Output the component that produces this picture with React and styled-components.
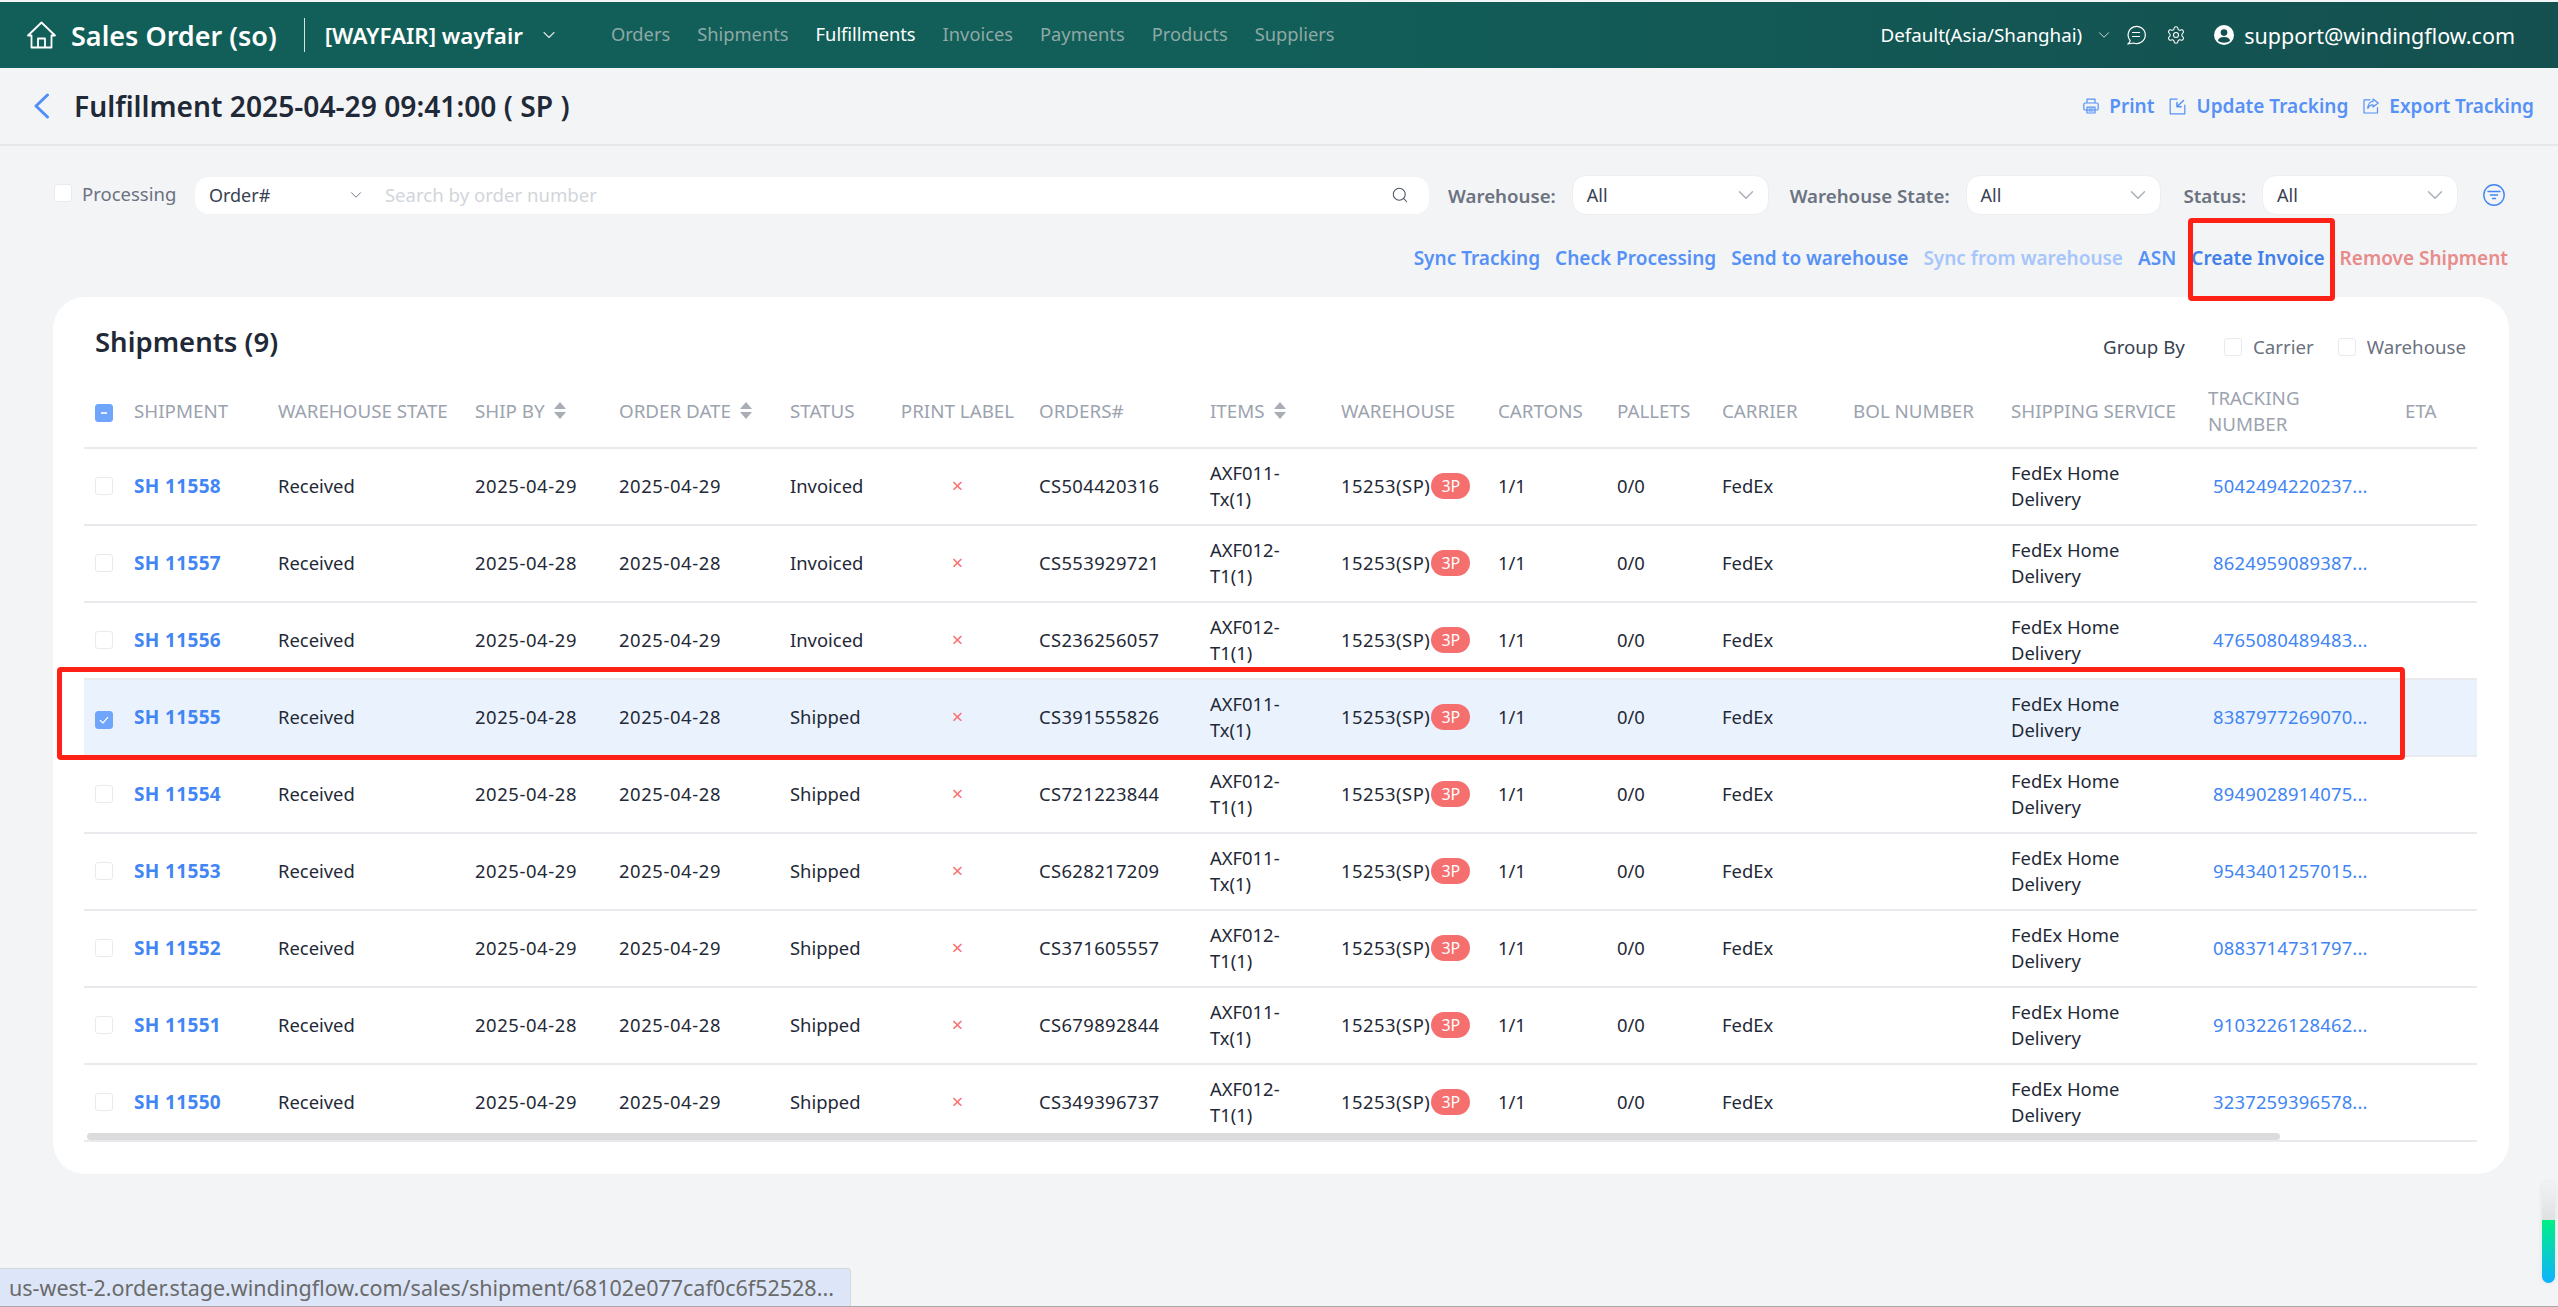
import React from 'react';
import styled, { createGlobalStyle } from 'styled-components';
import { ChevronDown, Search, Settings } from 'lucide-react';

const GlobalStyle = createGlobalStyle`
  html, body {
    margin: 0;
    padding: 0;
    background: #f3f4f6;
    font-family: "Noto Sans", "Noto Sans CJK SC", sans-serif;
    color: #1f2937;
  }
  * {
    box-sizing: border-box;
  }
`;

const Page = styled.div`
  position: relative;
  height: 1307px;
  overflow: hidden;
  padding-top: 2px;
  background: #f3f4f6;
  border-bottom: 1px solid #a8a8a8;
`;

const TopBar = styled.header`
  height: 66px;
  display: flex;
  align-items: center;
  padding: 0 43px 0 27px;
  background: linear-gradient(90deg, #125f59 0%, #125e58 50%, #14504f 100%);
  color: #fff;
`;

const AppTitle = styled.span`
  margin-left: 15px;
  font-size: 27px;
  font-weight: 600;
  white-space: nowrap;
`;

const Divider = styled.span`
  width: 1px;
  height: 34px;
  margin: 0 20px 0 27px;
  background: #d7e3e1;
`;

const Store = styled.span`
  font-size: 22.3px;
  font-weight: 600;
  white-space: nowrap;
`;

const Nav = styled.nav`
  display: flex;
  gap: 27px;
  margin: -3px 0 0 52px;
`;

const NavItem = styled.a`
  font-size: 18.3px;
  color: ${props => (props.$active ? '#fff' : '#8fa9a6')};
`;

const TopRight = styled.div`
  margin-left: auto;
  display: flex;
  align-items: center;
`;

const Zone = styled.span`
  font-size: 18.8px;
  white-space: nowrap;
`;

const Email = styled.span`
  margin-left: 10px;
  font-size: 21.5px;
  white-space: nowrap;
`;

const TitleRow = styled.div`
  height: 78px;
  display: flex;
  align-items: center;
  padding: 0 24px 0 33px;
  border-bottom: 2px solid #e5e7eb;
`;

const PageTitle = styled.h1`
  margin: 0 0 0 24px;
  font-size: 28.2px;
  font-weight: 600;
  color: #1f2937;
`;

const TitleActions = styled.div`
  margin-left: auto;
  display: flex;
  align-items: center;
  gap: 15px;
`;

const TitleAction = styled.a`
  display: flex;
  align-items: center;
  gap: 10px;
  font-size: 19px;
  font-weight: 600;
  color: #5591f6;
  white-space: nowrap;
`;

const FilterRow = styled.div`
  height: 40px;
  margin-top: 29px;
  display: flex;
  align-items: center;
  padding: 0 53px 0 54px;
`;

const Box = styled.span`
  display: inline-flex;
  align-items: center;
  justify-content: center;
  flex: none;
  width: 18px;
  height: 18px;
  border: 1px solid ${props => (props.$on ? '#70a5fc' : '#e8eaed')};
  border-radius: 3px;
  background: ${props => (props.$on ? '#70a5fc' : '#fff')};
`;

const Processing = styled.label`
  display: flex;
  align-items: center;
  gap: 10px;
  width: 141px;
  margin-top: -4px;
  font-size: 18.5px;
  color: #6b7280;
`;

const SearchBox = styled.div`
  width: 1235px;
  height: 37px;
  display: flex;
  align-items: center;
  padding: 0 20px 0 14px;
  background: #fff;
  border-radius: 14px;
`;

const OrderSelect = styled.div`
  width: 176px;
  display: flex;
  align-items: center;
  justify-content: space-between;
  padding-right: 20px;
  font-size: 18px;
  color: #374151;
`;

const Placeholder = styled.span`
  flex: 1;
  margin-top: -2px;
  font-size: 18.6px;
  color: #d1d5db;
`;

const FilterLabel = styled.span`
  margin-left: ${props => props.$gap}px;
  margin-right: 16px;
  font-size: 18.7px;
  font-weight: 600;
  color: #6b7280;
  white-space: nowrap;
`;

const Select = styled.div`
  width: ${props => props.$width}px;
  height: 40px;
  display: flex;
  align-items: center;
  justify-content: space-between;
  padding: 0 9px 0 14px;
  background: #fff;
  border: 1px solid #eceef1;
  border-radius: 14px;
  font-size: 18px;
  color: #374151;
`;

const FilterButton = styled.span`
  display: flex;
  margin-left: 25px;
`;

const ActionRow = styled.div`
  height: 40px;
  margin-top: 23px;
  display: flex;
  justify-content: flex-end;
  align-items: center;
  gap: 15px;
  padding-right: 50px;
`;

const ActionLink = styled.a`
  font-size: 19px;
  font-weight: 600;
  white-space: nowrap;
  color: ${props => props.$color || '#5591f6'};
`;

const Card = styled.section`
  height: 877px;
  margin: 19px 49px 0 53px;
  padding: 0 32px 0 31px;
  background: #fff;
  border-radius: 32px;
`;

const CardHead = styled.div`
  height: 77px;
  display: flex;
  align-items: center;
  justify-content: space-between;
  padding: 12px 11px 0 11px;
`;

const CardTitle = styled.h2`
  margin: 0;
  font-size: 27.5px;
  font-weight: 600;
  color: #1f2937;
`;

const GroupBy = styled.div`
  display: flex;
  align-items: center;
  padding-top: 10px;
  font-size: 18.7px;
  color: #374151;
`;

const GroupOption = styled.label`
  display: flex;
  align-items: center;
  gap: 11px;
  margin-left: ${props => props.$gap}px;
  color: #6b7280;
`;

const TableWrap = styled.div`
  position: relative;
`;

const Table = styled.table`
  width: 2393px;
  table-layout: fixed;
  border-collapse: collapse;
  font-size: 18.4px;
`;

const Th = styled.th`
  height: 74px;
  padding: 0 12px;
  border-bottom: 2px solid #e8eaed;
  font-size: 18.8px;
  font-weight: 400;
  line-height: 26px;
  color: #9ca3af;
  text-align: ${props => (props.$center ? 'center' : 'left')};
  white-space: nowrap;
`;

const SortWrap = styled.span`
  display: inline-flex;
  align-items: center;
  gap: 9px;
`;

const Row = styled.tr`
  background: ${props => (props.$selected ? '#eaf2fd' : '#fff')};
`;

const Td = styled.td`
  height: 77px;
  padding: 0 12px 2px;
  border-bottom: 2px solid #e8eaed;
  line-height: 26px;
  color: #1f2937;
  text-align: ${props => (props.$center ? 'center' : 'left')};
`;

const CheckCell = styled(Td)`
  padding: 3px 0 0 11px;
`;

const CheckHead = styled(Th)`
  padding: 0 0 0 11px;
`;

const Spaced = styled.span`
  letter-spacing: ${props => props.$ls}px;
`;

const ShipLink = styled.a`
  font-size: 19px;
  font-weight: 700;
  letter-spacing: 0.35px;
  color: #4285f4;
  white-space: nowrap;
`;

const Cross = styled.span`
  color: #f87171;
  font-size: 20px;
`;

const WarehouseCell = styled.span`
  display: flex;
  align-items: center;
  white-space: nowrap;
`;

const Badge = styled.span`
  width: 39px;
  height: 26px;
  display: inline-flex;
  align-items: center;
  justify-content: center;
  margin-left: 1px;
  background: #f56f6f;
  border-radius: 13px;
  color: #fff;
  font-size: 16px;
  letter-spacing: 0;
`;

const Tracking = styled.a`
  padding-left: 5px;
  letter-spacing: 0.2px;
  color: #4285f4;
  white-space: nowrap;
`;

const ScrollThumb = styled.div`
  position: absolute;
  left: 3px;
  bottom: 2px;
  width: 2193px;
  height: 7px;
  background: #dcdcdd;
  border-radius: 4px;
`;

const RedBox = styled.div`
  position: absolute;
  left: ${props => props.$left}px;
  top: ${props => props.$top}px;
  width: ${props => props.$width}px;
  height: ${props => props.$height}px;
  border: 5px solid #ff2016;
  border-radius: 4px;
  pointer-events: none;
`;

const StatusUrl = styled.div`
  position: absolute;
  left: 0;
  bottom: 0;
  width: 851px;
  height: 38px;
  padding: 0 0 0 9px;
  display: flex;
  align-items: center;
  background: #dce6f8;
  border-top: 1px solid #d4d7dc;
  border-right: 1px solid #d4d7dc;
  border-top-right-radius: 4px;
  font-size: 21.5px;
  color: #6a6a6a;
  white-space: nowrap;
`;

const Meter = styled.div`
  position: absolute;
  right: 3px;
  top: 1182px;
  width: 13px;
  height: 101px;
  background: linear-gradient(180deg, #f1f2f4 0%, #dfe0e2 38%, #e2e3e5 38%);
  border-radius: 7px;
  box-shadow: 0 0 5px rgba(0, 0, 0, 0.08);
  overflow: hidden;
`;

const MeterFill = styled.div`
  position: absolute;
  left: 0;
  right: 0;
  bottom: 0;
  height: 63px;
  background: linear-gradient(180deg, #00ef85 0%, #0fb2ff 100%);
`;

const HomeIcon = () => (
  <svg width="29" height="28" viewBox="0 0 29 28" fill="none" stroke="#fff" strokeWidth="1.8" strokeLinejoin="round">
    <path d="M1 14.5 14.5 1.5 28 14.5H24.5V26.5H4.5V14.5Z" />
    <path d="M11 26.5V17.5H18V26.5" />
  </svg>
);

const BackIcon = () => (
  <svg width="17" height="26" viewBox="0 0 17 26" fill="none" stroke="#4f8ff7" strokeWidth="3" strokeLinecap="round" strokeLinejoin="round">
    <path d="M14.5 2 3 13 14.5 24" />
  </svg>
);

const ChatIcon = () => (
  <svg width="20" height="20" viewBox="0 0 20 20" fill="none" stroke="#fff" strokeWidth="1.2" strokeLinecap="round">
    <path d="M4.2 15.6A8.6 8.6 0 1 1 7.6 18L1.8 19C3.2 18 3.9 17 4.2 15.6Z" strokeLinejoin="round" />
    <path d="M6.5 7.5H13.5M6.5 11.5H13.5" />
  </svg>
);

const UserIcon = () => (
  <svg width="20" height="20" viewBox="0 0 20 20">
    <circle cx="10" cy="10" r="10" fill="#fff" />
    <circle cx="10" cy="7.6" r="3.3" fill="#14504f" />
    <path d="M3.8 15.6C4.6 13 7 12 10 12S15.4 13 16.2 15.6C14.6 17 12.4 17.8 10 17.8S5.4 17 3.8 15.6Z" fill="#14504f" />
  </svg>
);

const PrintIcon = () => (
  <svg width="16" height="16" viewBox="0 0 16 16" fill="none" stroke="#5591f6" strokeWidth="1.2" strokeLinejoin="round">
    <path d="M4 5V1.2H12V5" />
    <rect x="0.8" y="5" width="14.4" height="7" rx="1.6" />
    <rect x="4" y="9.2" width="8" height="5.8" />
    <path d="M5.5 11H10.5M5.5 13H10.5" />
  </svg>
);

const UpdateIcon = () => (
  <svg width="17" height="17" viewBox="0 0 17 17" fill="none" stroke="#5591f6" strokeWidth="1.2" strokeLinecap="round" strokeLinejoin="round">
    <path d="M8 1.2H1.2V15.8H15.8V7" />
    <path d="M14.5 2.5 8 8.8M8 4.6V8.8H12.2" strokeWidth="1.5" />
  </svg>
);

const ExportIcon = () => (
  <svg width="16" height="16" viewBox="0 0 16 16" fill="none" stroke="#5591f6" strokeWidth="1.2" strokeLinecap="round" strokeLinejoin="round">
    <path d="M7 1.8H1V15H14.5V9.5" />
    <path d="M10 1 15.2 5 10 9V6.8C7.5 6.8 5.8 8 4.8 10.5 4.8 6.8 6.8 3.6 10 3.4Z" />
  </svg>
);

const FilterIcon = () => (
  <svg width="22" height="22" viewBox="0 0 22 22" fill="none" stroke="#4285f4" strokeWidth="1.4" strokeLinecap="round">
    <circle cx="11" cy="11" r="10.2" />
    <path d="M5 7.5H17M7.5 11H14.5M9.5 14.5H12.5" />
  </svg>
);

const SortIcon = () => (
  <svg width="12" height="17" viewBox="0 0 12 17" fill="#a8adb6">
    <path d="M6 0 12 7H0Z" />
    <path d="M0 10H12L6 17Z" />
  </svg>
);

const ROWS = [
  ['11558', '2025-04-29', 'Invoiced', 'CS504420316', 'AXF011-Tx(1)', '5042494220237...'],
  ['11557', '2025-04-28', 'Invoiced', 'CS553929721', 'AXF012-T1(1)', '8624959089387...'],
  ['11556', '2025-04-29', 'Invoiced', 'CS236256057', 'AXF012-T1(1)', '4765080489483...'],
  ['11555', '2025-04-28', 'Shipped', 'CS391555826', 'AXF011-Tx(1)', '8387977269070...'],
  ['11554', '2025-04-28', 'Shipped', 'CS721223844', 'AXF012-T1(1)', '8949028914075...'],
  ['11553', '2025-04-29', 'Shipped', 'CS628217209', 'AXF011-Tx(1)', '9543401257015...'],
  ['11552', '2025-04-29', 'Shipped', 'CS371605557', 'AXF012-T1(1)', '0883714731797...'],
  ['11551', '2025-04-28', 'Shipped', 'CS679892844', 'AXF011-Tx(1)', '9103226128462...'],
  ['11550', '2025-04-29', 'Shipped', 'CS349396737', 'AXF012-T1(1)', '3237259396578...'],
];

const COL_WIDTHS = [38, 144, 197, 144, 171, 110, 139, 171, 131, 157, 119, 105, 131, 158, 197, 197, 84];

const thinChevron = { strokeWidth: 1.3 };

export default function App() {
  return (
    <Page>
      <GlobalStyle />
      <TopBar>
        <HomeIcon />
        <AppTitle>Sales Order (so)</AppTitle>
        <Divider />
        <Store>[WAYFAIR] wayfair</Store>
        <ChevronDown size={20} color="#d9e5e3" style={{ marginLeft: 16 }} {...thinChevron} />
        <Nav>
          <NavItem>Orders</NavItem>
          <NavItem>Shipments</NavItem>
          <NavItem $active>Fulfillments</NavItem>
          <NavItem>Invoices</NavItem>
          <NavItem>Payments</NavItem>
          <NavItem>Products</NavItem>
          <NavItem>Suppliers</NavItem>
        </Nav>
        <TopRight>
          <Zone>Default(Asia/Shanghai)</Zone>
          <ChevronDown size={18} color="#cfdcda" style={{ margin: '0 13px' }} {...thinChevron} />
          <ChatIcon />
          <Settings size={20} color="#fff" strokeWidth={1.3} style={{ margin: '0 28px 0 20px' }} />
          <UserIcon />
          <Email>support@windingflow.com</Email>
        </TopRight>
      </TopBar>

      <TitleRow>
        <BackIcon />
        <PageTitle>Fulfillment 2025-04-29 09:41:00 ( SP )</PageTitle>
        <TitleActions>
          <TitleAction><PrintIcon />Print</TitleAction>
          <TitleAction><UpdateIcon />Update Tracking</TitleAction>
          <TitleAction><ExportIcon />Export Tracking</TitleAction>
        </TitleActions>
      </TitleRow>

      <FilterRow>
        <Processing><Box />Processing</Processing>
        <SearchBox>
          <OrderSelect>
            Order#
            <ChevronDown size={18} color="#6b7280" {...thinChevron} />
          </OrderSelect>
          <Placeholder>Search by order number</Placeholder>
          <Search size={18} color="#4b5563" strokeWidth={1.4} />
        </SearchBox>
        <FilterLabel $gap={19}>Warehouse:</FilterLabel>
        <Select $width={197}>All<ChevronDown size={26} color="#a8adb6" {...thinChevron} /></Select>
        <FilterLabel $gap={21}>Warehouse State:</FilterLabel>
        <Select $width={196}>All<ChevronDown size={26} color="#a8adb6" {...thinChevron} /></Select>
        <FilterLabel $gap={22}>Status:</FilterLabel>
        <Select $width={196}>All<ChevronDown size={26} color="#a8adb6" {...thinChevron} /></Select>
        <FilterButton><FilterIcon /></FilterButton>
      </FilterRow>

      <ActionRow>
        <ActionLink>Sync Tracking</ActionLink>
        <ActionLink>Check Processing</ActionLink>
        <ActionLink>Send to warehouse</ActionLink>
        <ActionLink $color="#a6c6fb">Sync from warehouse</ActionLink>
        <ActionLink>ASN</ActionLink>
        <ActionLink $color="#3f80ea">Create Invoice</ActionLink>
        <ActionLink $color="#e78b8b">Remove Shipment</ActionLink>
      </ActionRow>

      <Card>
        <CardHead>
          <CardTitle>Shipments (9)</CardTitle>
          <GroupBy>
            Group By
            <GroupOption $gap={39}><Box />Carrier</GroupOption>
            <GroupOption $gap={24}><Box />Warehouse</GroupOption>
          </GroupBy>
        </CardHead>
        <TableWrap>
          <Table>
            <colgroup>
              {COL_WIDTHS.map((w, i) => <col key={i} style={{ width: w }} />)}
            </colgroup>
            <thead>
              <tr>
                <CheckHead>
                  <Box $on>
                    <svg width="10" height="10" viewBox="0 0 10 10"><path d="M2 5H8" stroke="#fff" strokeWidth="1.6" /></svg>
                  </Box>
                </CheckHead>
                <Th>SHIPMENT</Th>
                <Th>WAREHOUSE STATE</Th>
                <Th><SortWrap>SHIP BY<SortIcon /></SortWrap></Th>
                <Th><SortWrap>ORDER DATE<SortIcon /></SortWrap></Th>
                <Th>STATUS</Th>
                <Th $center>PRINT LABEL</Th>
                <Th>ORDERS#</Th>
                <Th><SortWrap>ITEMS<SortIcon /></SortWrap></Th>
                <Th>WAREHOUSE</Th>
                <Th>CARTONS</Th>
                <Th>PALLETS</Th>
                <Th>CARRIER</Th>
                <Th>BOL NUMBER</Th>
                <Th>SHIPPING SERVICE</Th>
                <Th>TRACKING<br />NUMBER</Th>
                <Th>ETA</Th>
              </tr>
            </thead>
            <tbody>
              {ROWS.map(([id, date, status, order, item, tracking]) => {
                const selected = id === '11555';
                return (
                  <Row key={id} $selected={selected}>
                    <CheckCell>
                      <Box $on={selected}>
                        {selected && (
                          <svg width="12" height="12" viewBox="0 0 12 12" fill="none">
                            <path d="M2 6.2 5 9 10 3.2" stroke="#fff" strokeWidth="1.2" />
                          </svg>
                        )}
                      </Box>
                    </CheckCell>
                    <Td><ShipLink>SH {id}</ShipLink></Td>
                    <Td>Received</Td>
                    <Td><Spaced $ls={0.6}>{date}</Spaced></Td>
                    <Td><Spaced $ls={0.6}>{date}</Spaced></Td>
                    <Td>{status}</Td>
                    <Td $center><Cross>×</Cross></Td>
                    <Td><Spaced $ls={0.37}>{order}</Spaced></Td>
                    <Td>{item}</Td>
                    <Td>
                      <WarehouseCell>
                        <Spaced $ls={0.5}>15253(SP)</Spaced>
                        <Badge>3P</Badge>
                      </WarehouseCell>
                    </Td>
                    <Td>1/1</Td>
                    <Td>0/0</Td>
                    <Td>FedEx</Td>
                    <Td />
                    <Td>FedEx Home Delivery</Td>
                    <Td><Tracking>{tracking}</Tracking></Td>
                    <Td />
                  </Row>
                );
              })}
            </tbody>
          </Table>
          <ScrollThumb />
        </TableWrap>
      </Card>

      <RedBox $left={2188} $top={218} $width={147} $height={83} />
      <RedBox $left={57} $top={667} $width={2348} $height={93} />
      <Meter><MeterFill /></Meter>
      <StatusUrl>us-west-2.order.stage.windingflow.com/sales/shipment/68102e077caf0c6f52528...</StatusUrl>
    </Page>
  );
}
